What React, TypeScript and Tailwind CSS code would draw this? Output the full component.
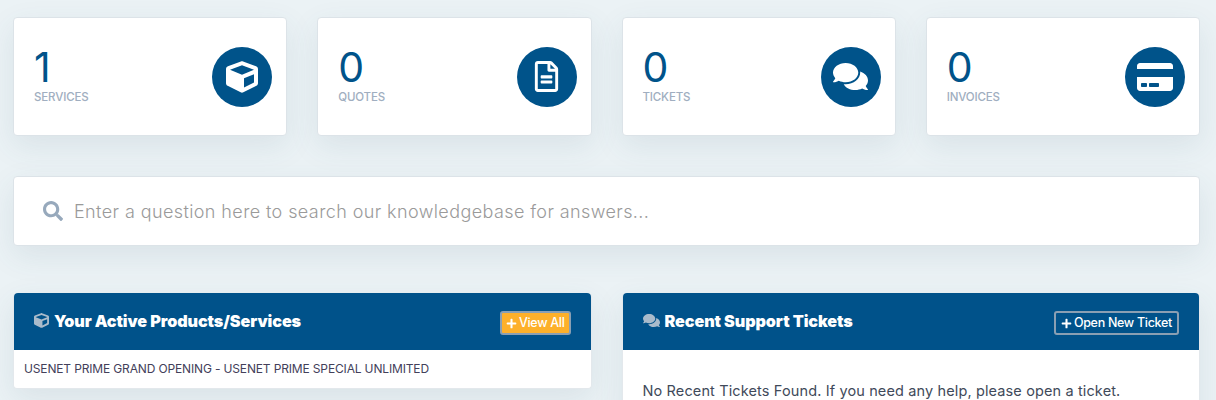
import React from "react";
import { FaCube, FaRegFileAlt, FaComments, FaCreditCard, FaSearch, FaPlus } from "react-icons/fa";

const font = "font-['Inter','Liberation_Sans',sans-serif]";
const shadow = "shadow-[0_10px_30px_rgba(60,100,120,0.1)]";

function Stat({ n, label, icon }: { n: string; label: string; icon: React.ReactNode }) {
  return (
    <div className={`h-[119px] bg-white border border-[#dce3e8] rounded-[4px] ${shadow} flex items-center justify-between pl-[20px] pr-[14px]`}>
      <div>
        <div className="text-[41px] leading-[38px] font-normal text-[#00538a]">{n}</div>
        <div className="text-[11.5px] leading-[18px] mt-[2px] font-medium text-[#a0aec0] uppercase tracking-[-0.15px]">{label}</div>
      </div>
      <div className="w-[60px] h-[60px] rounded-full bg-[#00538a] flex items-center justify-center text-white">{icon}</div>
    </div>
  );
}

function Head({ icon, title, children }: { icon: React.ReactNode; title: string; children: React.ReactNode }) {
  return (
    <div className="h-[57px] bg-[#00528a] rounded-t-[4px] flex items-center justify-between pl-[20px] pr-[20px]">
      <div className="flex items-center gap-[5px] -mt-[1px]">
        <span className="text-[#a9bbcb]">{icon}</span>
        <span className="text-white text-[16.2px] font-black tracking-[-0.1px]">{title}</span>
      </div>
      {children}
    </div>
  );
}

export default function App() {
  return (
    <div className={`${font} w-[1216px] h-[400px] overflow-hidden bg-[#ebf2f5] pl-[13px] pr-[16px] pt-[17px]`}>
      <div className="grid grid-cols-4 gap-[30px]">
        <Stat n="1" label="Services" icon={<FaCube size={32} />} />
        <Stat n="0" label="Quotes" icon={<FaRegFileAlt size={31} />} />
        <Stat n="0" label="Tickets" icon={<FaComments size={35} />} />
        <Stat n="0" label="Invoices" icon={<FaCreditCard size={36} />} />
      </div>
      <div className={`mt-[40px] h-[70px] bg-white border border-[#dce3e8] rounded-[4px] ${shadow} flex items-center pl-[29px]`}>
        <FaSearch size={20} className="text-[#97a9bc]" />
        <span className="ml-[11px] mt-[1px] text-[18px] font-light text-[#9a9a9a] tracking-[0.4px]">Enter a question here to search our knowledgebase for answers...</span>
      </div>
      <div className="mt-[47px] grid grid-cols-2 gap-[30px]">
        <div className={`bg-white rounded-[4px] self-start border-x border-b border-[#e3e8ec] ${shadow}`}>
          <Head icon={<FaCube size={15} className="block" />} title="Your Active Products/Services">
            <span className="flex items-center gap-[2px] h-[24px] px-[4px] bg-[#fdb02a] border-2 border-[#8a9fb3] rounded-[3px] text-white text-[12.5px] font-medium tracking-[-0.3px] mt-[3px]">
              <FaPlus size={11} />View All
            </span>
          </Head>
          <div className="h-[38px] flex items-center pl-[10px] pb-[1px] text-[12px] text-[#43405a] tracking-[-0.15px]">USENET PRIME GRAND OPENING - USENET PRIME SPECIAL UNLIMITED</div>
        </div>
        <div className={`bg-white rounded-[4px] border-x border-[#e3e8ec] ${shadow}`}>
          <Head icon={<FaComments size={17} className="block" />} title="Recent Support Tickets">
            <span className="flex items-center gap-[2px] h-[24px] px-[5px] border-2 border-[#8a9fb3] rounded-[3px] text-white text-[12.5px] font-medium tracking-[-0.3px] mt-[3px]">
              <FaPlus size={11} />Open New Ticket
            </span>
          </Head>
          <div className="pt-[30px] pb-[30px] pl-[20px] text-[14.5px] text-[#3f4a5a] tracking-[0.13px]">No Recent Tickets Found. If you need any help, please open a ticket.</div>
        </div>
      </div>
    </div>
  );
}
